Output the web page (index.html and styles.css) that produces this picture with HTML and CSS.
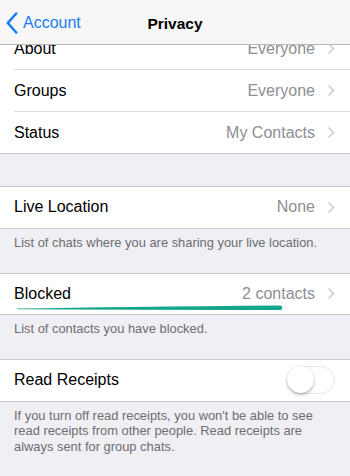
FILE: index.html
```html
<!DOCTYPE html>
<html>
<head>
<meta charset="utf-8">
<link rel="stylesheet" href="styles.css">
</head>
<body>
<div class="screen">
  <header class="nav">
    <div class="back">
      <svg class="back-icon" width="12" height="22" viewBox="0 0 12 22"><path d="M10.2 1.5L1.8 11l8.4 9.5" fill="none" stroke="#1a7cf5" stroke-width="2.6" stroke-linecap="round" stroke-linejoin="round"/></svg>
      <span>Account</span>
    </div>
    <div class="title">Privacy</div>
  </header>

  <div class="content">
    <section class="group first">
      <div class="row"><span class="label">About</span><span class="value">Everyone</span><svg class="chev" width="8" height="13" viewBox="0 0 8 13"><path d="M1.5 1.5l5 5-5 5" fill="none" stroke="#c7c7cc" stroke-width="1.4"/></svg></div>
      <div class="row"><span class="label">Groups</span><span class="value">Everyone</span><svg class="chev" width="8" height="13" viewBox="0 0 8 13"><path d="M1.5 1.5l5 5-5 5" fill="none" stroke="#c7c7cc" stroke-width="1.4"/></svg></div>
      <div class="row"><span class="label">Status</span><span class="value">My Contacts</span><svg class="chev" width="8" height="13" viewBox="0 0 8 13"><path d="M1.5 1.5l5 5-5 5" fill="none" stroke="#c7c7cc" stroke-width="1.4"/></svg></div>
    </section>

    <div class="spacer"></div>

    <section class="group">
      <div class="row"><span class="label">Live Location</span><span class="value">None</span><svg class="chev" width="8" height="13" viewBox="0 0 8 13"><path d="M1.5 1.5l5 5-5 5" fill="none" stroke="#c7c7cc" stroke-width="1.4"/></svg></div>
    </section>
    <p class="footer">List of chats where you are sharing your live location.</p>

    <section class="group">
      <div class="row marked"><span class="label">Blocked</span><span class="value">2 contacts</span><svg class="chev" width="8" height="13" viewBox="0 0 8 13"><path d="M1.5 1.5l5 5-5 5" fill="none" stroke="#c7c7cc" stroke-width="1.4"/></svg>
        <svg class="stroke" width="350" height="8" viewBox="0 0 350 8"><path d="M17 4.6 Q120 2.6 280 1.4 A2.3 2.3 0 0 1 280 6 Q120 5.6 17 5.2 Z" fill="#14a68a"/></svg>
      </div>
    </section>
    <p class="footer">List of contacts you have blocked.</p>

    <section class="group">
      <div class="row"><span class="label">Read Receipts</span><span class="switch"><span class="knob"></span></span></div>
    </section>
    <p class="footer">If you turn off read receipts, you won't be able to see read receipts from other people. Read receipts are always sent for group chats.</p>

    <section class="group">
      <div class="row"></div>
    </section>
  </div>
</div>
</body>
</html>
```

FILE: styles.css
```css
* { box-sizing: border-box; }
html, body { margin: 0; padding: 0; }
body {
  background: #efeff4;
  font-family: "Liberation Sans", Arial, sans-serif;
  width: 350px;
  height: 476px;
  overflow: hidden;
}
.screen { position: relative; width: 350px; height: 476px; overflow: hidden; }
.nav {
  position: absolute;
  top: 0; left: 0; right: 0;
  height: 45px;
  padding-top: 3px;
  background: #f7f7f7;
  border-bottom: 1px solid #b9b9bd;
  display: flex;
  align-items: center;
  justify-content: center;
  z-index: 2;
}
.back {
  position: absolute;
  left: 6px;
  top: 1px; bottom: 0;
  display: flex;
  align-items: center;
  gap: 5px;
  color: #1a7cf5;
  font-size: 16px;
}
.title { font-size: 15.5px; font-weight: bold; color: #000; }
.content { padding-top: 28px; }
.group {
  background: #fff;
  border-top: 1px solid #c8c7cc;
  border-bottom: 1px solid #c8c7cc;
}
.group.first { border-top: none; }
.row {
  height: 42px;
  margin-left: 14px;
  padding-right: 15px;
  display: flex;
  align-items: center;
  font-size: 16px;
  border-bottom: 1px solid #dcdce0;
}
.row:last-child { border-bottom: none; height: 40.5px; }
.group.first .row:last-child { height: 41px; }
.label { color: #000; flex: 1; }
.value { color: #8e8e93; margin-right: 12px; }
.chev { display: block; }
.spacer { height: 32px; }
.footer {
  margin: 0;
  padding: 6px 14px 22.5px;
  font-size: 12.9px;
  line-height: 15.5px;
  color: #6d6d72;
}
.marked { position: relative; }
.stroke { position: absolute; left: -14px; top: 30px; }
.switch {
  width: 48px; height: 28px;
  border-radius: 14px;
  border: 1.5px solid #e5e5ea;
  background: #fff;
  position: relative;
}
.knob {
  position: absolute;
  left: -1px; top: -1px;
  width: 27px; height: 27px;
  border-radius: 50%;
  background: #fff;
  box-shadow: 0 2px 3px rgba(0,0,0,0.25), 0 0 0 0.5px rgba(0,0,0,0.08);
}
```
